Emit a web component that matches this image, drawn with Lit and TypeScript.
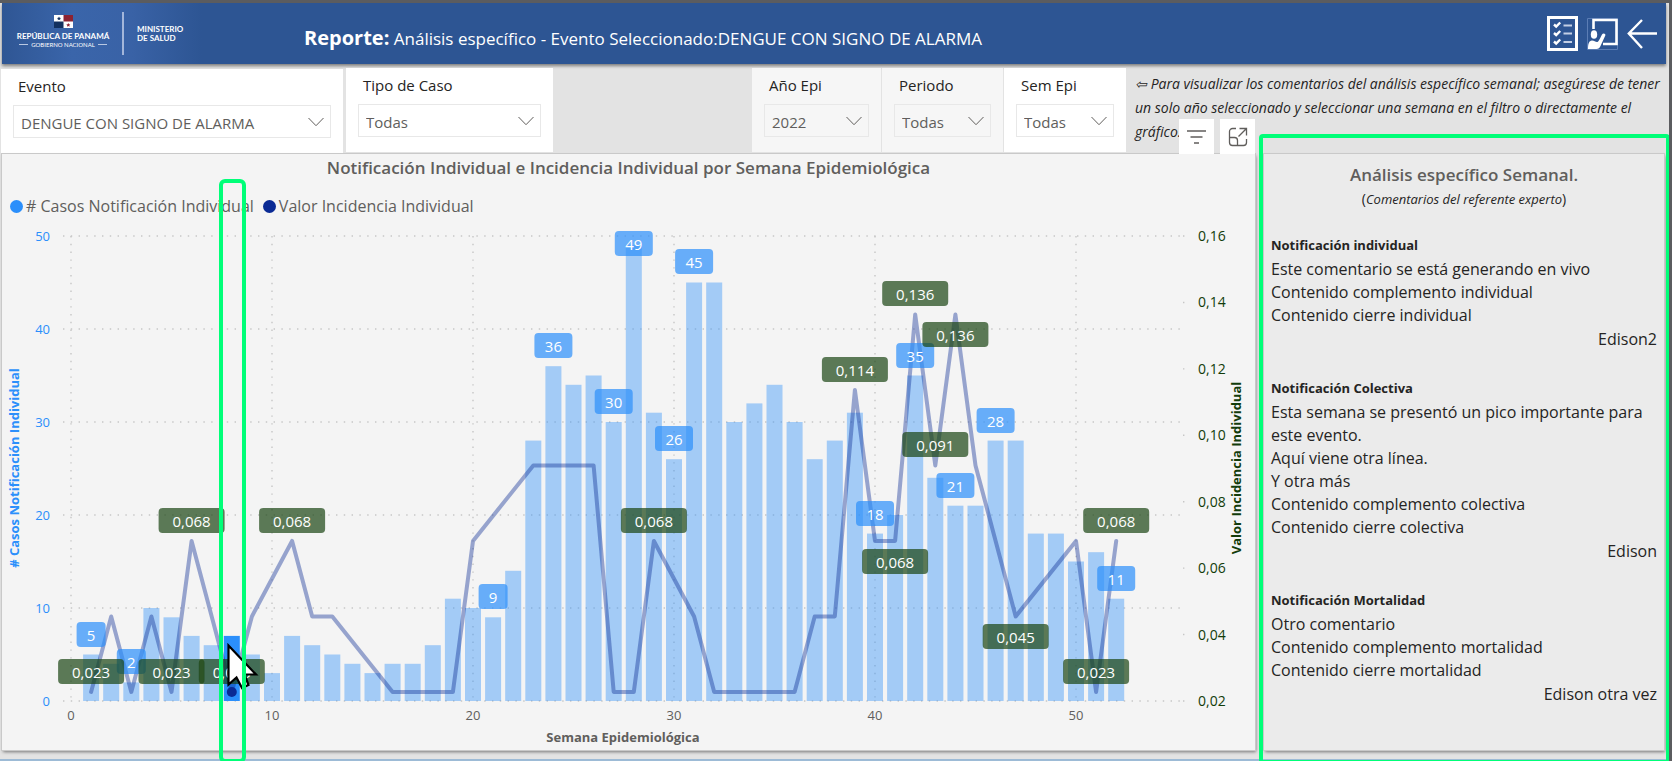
import { LitElement, html, svg, css } from 'lit';
import { customElement, property } from 'lit/decorators.js';

interface Filter {
  id: string;
  label: string;
  value: string;
  kind: string;
}

interface CommentGroup {
  title: string;
  lines: string[];
  author: string;
}

interface Tag {
  week: number;
  text: string;
  below?: boolean;
}

const CASES = [
  5, 4, 2, 10, 9, 7, 6, 7, 5, 3, 7, 6, 5, 4, 3, 4, 4, 6, 11, 10, 9, 14, 28, 36, 34, 35,
  30, 49, 31, 26, 45, 45, 30, 32, 34, 30, 26, 28, 31, 18, 20, 35, 24, 21, 21, 28, 28,
  18, 18, 15, 16, 11,
];

const SELECTED_WEEK = 8;
const RATE_STEP = 0.02273;

/* [week, multiple of RATE_STEP] */
const RATE: [number, number][] = [
  [1, 1], [2, 2], [3, 1], [4, 2], [5, 1], [6, 3], [8, 1], [9, 2], [11, 3], [12, 2], [13, 2],
  [16, 1], [19, 1], [20, 3], [23, 4], [26, 4], [27, 1], [28, 1], [29, 3], [31, 2], [32, 1],
  [36, 1], [37, 2], [38, 2], [39, 5], [40, 3], [41, 3], [42, 6], [43, 4], [44, 6], [45, 4],
  [47, 2], [50, 3], [51, 1], [52, 3],
];

const CASE_TAGS = [1, 3, 21, 24, 27, 28, 30, 31, 40, 42, 44, 46, 52];

const RATE_TAGS: Tag[] = [
  { week: 1, text: '0,023' },
  { week: 5, text: '0,023' },
  { week: 6, text: '0,068' },
  { week: 8, text: '0,023' },
  { week: 11, text: '0,068' },
  { week: 29, text: '0,068' },
  { week: 39, text: '0,114' },
  { week: 41, text: '0,068', below: true },
  { week: 42, text: '0,136' },
  { week: 43, text: '0,091' },
  { week: 44, text: '0,136', below: true },
  { week: 47, text: '0,045', below: true },
  { week: 51, text: '0,023' },
  { week: 52, text: '0,068' },
];

const TOP = 235;
const BASE = 700;
const X0 = 71;
const xOf = (week: number) => X0 + week * 20.1;
const yCases = (n: number) => BASE - n * 9.3;
const yRate = (v: number) => BASE - ((v - 0.02) / 0.14) * (BASE - TOP);

@customElement('epi-filter')
export class EpiFilter extends LitElement {
  @property() label = '';
  @property() value = '';

  static styles = css`
    :host {
      display: block;
      box-sizing: border-box;
      padding: 5px 12px 15px;
      background: #fff;
    }
    label {
      display: block;
      padding-left: 5px;
      margin-bottom: 7px;
      font-size: 15px;
      line-height: 24px;
      color: #252423;
    }
    .box {
      display: grid;
      align-items: center;
    }
    select,
    svg {
      grid-area: 1 / 1;
    }
    select {
      appearance: none;
      box-sizing: border-box;
      width: 100%;
      height: 33px;
      margin: 0;
      padding: 2px 28px 0 7px;
      border: 1px solid #e8e8e8;
      border-radius: 0;
      background: transparent;
      font: 15px 'Open Sans', 'Noto Sans', sans-serif;
      color: #605e5c;
    }
    svg {
      justify-self: end;
      margin-right: 7px;
      pointer-events: none;
    }
  `;

  render() {
    return html`
      <label for="s">${this.label}</label>
      <div class="box">
        <select id="s">
          <option>${this.value}</option>
        </select>
        <svg width="16" height="10" viewBox="0 0 16 10" fill="none" stroke="#605e5c">
          <path d="M.5 1 8 8.7 15.5 1" />
        </svg>
      </div>
    `;
  }
}

@customElement('epi-chart')
export class EpiChart extends LitElement {
  static styles = css`
    :host {
      display: block;
    }
    svg {
      display: block;
      width: 100%;
      overflow: visible;
      font-family: 'Open Sans', 'Noto Sans', sans-serif;
    }
    .grid {
      stroke: #c6c6c6;
      stroke-width: 1.4;
      stroke-dasharray: 1.4 6.4;
    }
    .bar {
      fill: #2b8ffb;
      fill-opacity: 0.4;
    }
    .bar.on {
      fill-opacity: 1;
    }
    .rate {
      fill: none;
      stroke: #0a2a94;
      stroke-opacity: 0.4;
      stroke-width: 4;
      stroke-linecap: round;
      stroke-linejoin: round;
    }
    .point {
      fill: #0a2a94;
    }
    .tag {
      fill-opacity: 0.7;
    }
    .tag.cases {
      fill: #2b8ffb;
    }
    .tag.value {
      fill: #1a4513;
    }
    .tag-text {
      fill: #fff;
      font-size: 15px;
      text-anchor: middle;
    }
    .left {
      fill: #2b8ffb;
      font-size: 13px;
      text-anchor: end;
    }
    .right {
      fill: #123c0a;
      font-size: 14px;
    }
    .bottom {
      fill: #605e5c;
      font-size: 13px;
      text-anchor: middle;
    }
    .axis-title {
      font-size: 13px;
      font-weight: 700;
      text-anchor: middle;
    }
    .mark {
      fill: none;
      stroke: #00ff78;
      stroke-width: 4;
    }
  `;

  private tag(x: number, y: number, w: number, text: string, kind: string) {
    const top = Math.round(y);
    return svg`
      <rect class="tag ${kind}" x=${x - w / 2} y=${top} width=${w} height="25" rx="4" />
      <text class="tag-text" x=${x} y=${top + 19}>${text}</text>
    `;
  }

  render() {
    const line = RATE.map(([w, k]) => `${xOf(w)},${yRate(k * RATE_STEP)}`).join(' ');
    const rateAt = new Map(RATE);
    return html`
      <svg viewBox="2 219 1253 530" role="img" aria-label="Casos e incidencia por semana epidemiológica">
        ${[0, 10, 20, 30, 40, 50].map(
          (n) => svg`
            <line class="grid" x1="63" x2="1184" y1=${yCases(n)} y2=${yCases(n)} />
            <line class="grid" x1=${xOf(n)} x2=${xOf(n)} y1=${TOP} y2=${BASE} />
            <text class="left" x="50" y=${yCases(n) + 5}>${n}</text>
            <text class="bottom" x=${xOf(n)} y="719">${n}</text>
          `,
        )}
        ${[0.02, 0.04, 0.06, 0.08, 0.1, 0.12, 0.14, 0.16].map(
          (v) => svg`
            <line class="grid" x1="1183" x2="1185" y1=${yRate(v)} y2=${yRate(v)} />
            <text class="right" x="1198" y=${yRate(v) + 5}>${v.toFixed(2).replace('.', ',')}</text>
          `,
        )}
        <text class="axis-title" fill="#2b8ffb" transform="translate(19 467) rotate(-90)"># Casos Notificación Individual</text>
        <text class="axis-title" fill="#123c0a" transform="translate(1241 467) rotate(-90)">Valor Incidencia Individual</text>
        <text class="axis-title" fill="#605e5c" x="623" y="741">Semana Epidemiológica</text>

        ${CASES.map(
          (n, i) => svg`<rect
            class="bar ${i + 1 === SELECTED_WEEK ? 'on' : ''}"
            x=${xOf(i + 1) - 8} y=${yCases(n)} width="16" height=${n * 9.3} />`,
        )}
        <polyline class="rate" points=${line} />
        ${CASE_TAGS.map((w) => {
          const n = CASES[w - 1];
          const y = Math.max(yCases(n) - 33, 230);
          return this.tag(xOf(w), y, n < 10 ? 29 : 38, String(n), 'cases');
        })}
        ${RATE_TAGS.map((t) => {
          const y = yRate((rateAt.get(t.week) ?? 0) * RATE_STEP);
          return this.tag(xOf(t.week), t.below ? y + 8 : y - 33, 66, t.text, 'value');
        })}
        <circle class="point" cx=${xOf(SELECTED_WEEK)} cy=${yRate(RATE_STEP)} r="5" />

        <path
          d="M228.5 644.5V683.5L236.500 676.5 242 687 248.5 684 244.5 673.5H256Z"
          fill="#fff" stroke="#000" stroke-width="2.2" />
        <rect class="mark" x="221" y="180" width="23" height="580" rx="4" />
      </svg>
    `;
  }
}

@customElement('app-root')
export class AppRoot extends LitElement {
  private filters: Filter[] = [
    { id: 'evento', label: 'Evento', value: 'DENGUE CON SIGNO DE ALARMA', kind: 'event' },
    { id: 'tipo', label: 'Tipo de Caso', value: 'Todas', kind: 'case' },
    { id: 'anio', label: 'Año Epi', value: '2022', kind: 'year dim' },
    { id: 'periodo', label: 'Periodo', value: 'Todas', kind: 'period dim' },
    { id: 'sem', label: 'Sem Epi', value: 'Todas', kind: 'week' },
  ];

  private groups: CommentGroup[] = [
    {
      title: 'Notificación individual',
      lines: [
        'Este comentario se está generando en vivo',
        'Contenido complemento individual',
        'Contenido cierre individual',
      ],
      author: 'Edison2',
    },
    {
      title: 'Notificación Colectiva',
      lines: [
        'Esta semana se presentó un pico importante para este evento.',
        'Aquí viene otra línea.',
        'Y otra más',
        'Contenido complemento colectiva',
        'Contenido cierre colectiva',
      ],
      author: 'Edison',
    },
    {
      title: 'Notificación Mortalidad',
      lines: ['Otro comentario', 'Contenido complemento mortalidad', 'Contenido cierre mortalidad'],
      author: 'Edison otra vez',
    },
  ];

  static styles = css`
    :host {
      display: block;
      box-sizing: border-box;
      min-height: 100vh;
      overflow: hidden;
      border-top: 3px solid #5b5c5f;
      border-right: 3px solid #5b5c5f;
      background: #e3e3e3;
      font-family: 'Open Sans', 'Noto Sans', sans-serif;
      color: #252423;
    }
    h1,
    h2,
    h3,
    p {
      margin: 0;
    }

    .header {
      display: flex;
      align-items: center;
      height: 61px;
      box-sizing: border-box;
      margin: 0 3px 0 2px;
      padding: 0 9px 0 15px;
      background: linear-gradient(90deg, #2f5694 0, #3a65aa 70px, #3962a6 130px, #2d5593 200px);
      box-shadow: 0 2px 3px #7d7d7d;
      color: #fff;
    }
    .brand {
      display: flex;
      align-items: center;
      width: 287px;
      height: 100%;
      flex: none;
      font-family: Lato, 'Open Sans', sans-serif;
      font-weight: 700;
      font-size: 8px;
      line-height: 9px;
    }
    .country {
      display: flex;
      flex-direction: column;
      align-items: center;
      width: 92px;
      padding-bottom: 4px;
      white-space: nowrap;
      text-align: center;
    }
    .flag {
      margin-bottom: 4px;
    }
    .gov {
      display: flex;
      align-items: center;
      gap: 3px;
      font-size: 6px;
      line-height: 8px;
      font-weight: 400;
    }
    .gov::before,
    .gov::after {
      content: '';
      width: 9px;
      height: 1px;
      background: #b9c8e2;
    }
    .rule {
      width: 2px;
      height: 43px;
      margin: 0 13px;
      background: #a3b6da;
    }
    .title {
      flex: 1;
      padding-top: 10px;
      font-size: 17px;
      line-height: 28px;
      font-weight: 400;
    }
    .title b {
      font-size: 20px;
    }
    .tools {
      display: flex;
      align-items: center;
      gap: 9px;
    }
    .tools button {
      display: block;
      padding: 0;
      border: 0;
      background: none;
      color: inherit;
    }
    .tools svg,
    .visual-tools svg {
      display: block;
    }

    .filters {
      display: flex;
      align-items: flex-start;
      padding: 4px 4px 0 1px;
      height: 86px;
    }
    epi-filter {
      flex: none;
    }
    .event {
      width: 342px;
      margin: 1px 3px 0 0;
    }
    .case {
      width: 207px;
    }
    .year {
      width: 129px;
      margin-right: 1px;
    }
    .period {
      width: 121px;
      margin-right: 1px;
    }
    .week {
      width: 122px;
      margin-right: 9px;
    }
    .dim {
      background: #f6f6f6;
    }
    .space {
      flex: 199 1 0;
    }
    .note {
      flex: 530 1 0;
      padding-top: 4px;
      font-size: 14px;
      line-height: 24px;
      font-style: italic;
    }

    .main {
      display: grid;
      grid-template-columns: minmax(0, 1fr) 400px;
      gap: 9px;
      padding: 0 5px 9px 2px;
      border-bottom: 2px solid #9dbbd6;
    }
    .card {
      position: relative;
      background: #f4f4f4;
      box-shadow:
        0 0 0 1px #c9c9c9,
        1px 2px 3px #777;
    }
    .visual-tools {
      position: absolute;
      right: 0;
      bottom: 100%;
      display: flex;
      gap: 6px;
    }
    .visual-tools button {
      display: grid;
      place-items: center;
      width: 35px;
      height: 35px;
      padding: 0;
      border: 0;
      background: #fff;
    }
    .card-title {
      font-size: 17px;
      line-height: 28px;
      font-weight: 600;
      text-align: center;
      color: #605e5c;
    }
    .legend {
      display: flex;
      gap: 9px;
      margin: 0;
      padding: 10px 8px 0;
      list-style: none;
      font-size: 16px;
      line-height: 28px;
      color: #605e5c;
    }
    .legend li {
      display: flex;
      align-items: center;
      gap: 3px;
    }
    .dot {
      width: 13px;
      height: 13px;
      border-radius: 50%;
      background: #2b8ffb;
    }
    .dot.navy {
      background: #0a2a94;
    }

    .comments {
      padding: 7px 7px 0;
      background: #ebebeb;
    }
    .sub {
      margin-bottom: 24px;
      font-size: 14px;
      line-height: 20px;
      text-align: center;
    }
    .group {
      margin-bottom: 24px;
      font-size: 16px;
      line-height: 23px;
    }
    .sub em,
    .group h3 {
      font-size: 13px;
    }
    .group h3,
    .author {
      line-height: 25px;
    }
    .author {
      text-align: right;
    }
    .frame {
      position: absolute;
      inset: -20px -6px -14px -5px;
      border: 4px solid #00ff78;
      border-radius: 4px;
      pointer-events: none;
    }
  `;

  render() {
    return html`
      <header class="header">
        <div class="brand">
          <div class="country">
            <svg class="flag" width="19" height="13" viewBox="0 0 19 13">
              <path fill="#fff" d="M0 0h19v13H0z" />
              <path fill="#8c2332" d="M9.5 0H19v6.5H9.5z" />
              <path fill="#12305e" d="M0 6.5h9.5V13H0z" />
              <path fill="#12305e" d="m5 1.5.6 1.3 1.4.1-1 1 .3 1.4L5 4.600l-1.300.7.3-1.400-1-1 1.400-.1z" />
              <path fill="#8c2332" d="m14.3 8 .6 1.300 1.400.1-1 1 .3 1.400-1.300-.7-1.300.7.3-1.400-1-1 1.400-.1z" />
            </svg>
            <span>REPÚBLICA DE PANAMÁ</span>
            <span class="gov">GOBIERNO NACIONAL</span>
          </div>
          <div class="rule"></div>
          <div>MINISTERIO<br />DE SALUD</div>
        </div>
        <h1 class="title"><b>Reporte:</b> Análisis específico - Evento Seleccionado:DENGUE CON SIGNO DE ALARMA</h1>
        <div class="tools">
          <button aria-label="Lista">
            <svg width="31" height="35" viewBox="0 0 31 35" fill="none" stroke="#fff">
              <path stroke-width="3" d="M1.5 1.5h28v32h-28z" />
              <path stroke-width="2.4" d="m7 8.5 2.2 2 4-4M7 17l2.2 2 4-4M7 25.5l2.2 2 4-4" />
              <path stroke="#c3cfe5" stroke-width="2.2" d="M16.5 9.5H25M16.5 17.5H25M16.5 26H25" />
            </svg>
          </button>
          <button aria-label="Presentación">
            <svg width="31" height="32" viewBox="0 0 31 32" fill="none">
              <path stroke="#5b7db5" d="M.5.5h30v31H.5z" />
              <path stroke="#fff" stroke-width="2.6" d="M6.5 11V2H29.500v24H16" />
              <ellipse cx="7" cy="16.5" rx="3.2" ry="4.3" fill="#fff" />
              <path
                fill="#fff"
                d="M1 31c0-5 1-8.5 4-8.5 2 0 3.5 1.5 5 1.5 1.3 0 2-1.5 5-7.5 1-2 4-1 3.3 1L13.5 28c-.8 2-2 3-4 3z" />
            </svg>
          </button>
          <button aria-label="Atrás">
            <svg width="30" height="30" viewBox="0 0 30 30" fill="none" stroke="#fff" stroke-width="2.4">
              <path d="M15 1 1.8 14.5 15 29M2 14.5h28" />
            </svg>
          </button>
        </div>
      </header>

      <section class="filters">
        ${this.filters.map(
          (f) => html`
            ${f.id === 'anio' ? html`<div class="space"></div>` : ''}
            <epi-filter class=${f.kind} .label=${f.label} .value=${f.value}></epi-filter>
          `,
        )}
        <p class="note">
          ⇦ Para visualizar los comentarios del análisis específico semanal; asegúrese de tener un solo año
          seleccionado y seleccionar una semana en el filtro o directamente el gráfico.
        </p>
      </section>

      <main class="main">
        <section class="card">
          <div class="visual-tools">
            <button aria-label="Filtros">
              <svg width="19" height="16" viewBox="0 0 19 16" stroke="#605e5c" stroke-width="1.4">
                <path d="M0 2h19M3.5 8h12M7 14h5" />
              </svg>
            </button>
            <button aria-label="Modo de enfoque">
              <svg width="20" height="20" viewBox="0 0 20 20" fill="none" stroke="#605e5c" stroke-width="1.3">
                <path
                  d="M8 1.500H4.500A3 3 0 0 0 1.500 4.500v11a3 3 0 0 0 3 3h11a3 3 0 0 0 3-3V12M1.500 10.500h5a3 3 0 0 1 3 3v5M11.500 1.500h7v7M18.500 1.500l-8 8" />
              </svg>
            </button>
          </div>
          <h2 class="card-title">Notificación Individual e Incidencia Individual por Semana Epidemiológica</h2>
          <ul class="legend">
            <li><span class="dot"></span># Casos Notificación Individual</li>
            <li><span class="dot navy"></span>Valor Incidencia Individual</li>
          </ul>
          <epi-chart></epi-chart>
        </section>

        <aside class="card comments">
          <h2 class="card-title">Análisis específico Semanal.</h2>
          <p class="sub">(<em>Comentarios del referente experto</em>)</p>
          ${this.groups.map(
            (g) => html`
              <div class="group">
                <h3>${g.title}</h3>
                ${g.lines.map((l) => html`<p>${l}</p>`)}
                <p class="author">${g.author}</p>
              </div>
            `,
          )}
          <div class="frame"></div>
        </aside>
      </main>
    `;
  }
}
